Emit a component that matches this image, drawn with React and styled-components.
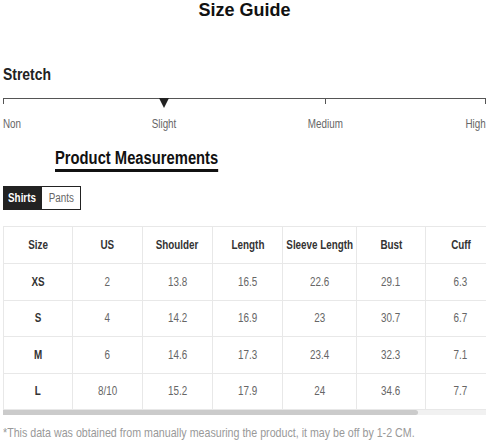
import styled, { createGlobalStyle } from "styled-components";

const GlobalStyle = createGlobalStyle`
  body {
    margin: 0;
    background: #fff;
    font-family: "Liberation Sans", Arial, sans-serif;
    color: #333;
  }
`;

const sizes = [
  { size: "XS", us: "2", shoulder: "13.8", length: "16.5", sleeve: "22.6", bust: "29.1", cuff: "6.3" },
  { size: "S", us: "4", shoulder: "14.2", length: "16.9", sleeve: "23", bust: "30.7", cuff: "6.7" },
  { size: "M", us: "6", shoulder: "14.6", length: "17.3", sleeve: "23.4", bust: "32.3", cuff: "7.1" },
  { size: "L", us: "8/10", shoulder: "15.2", length: "17.9", sleeve: "24", bust: "34.6", cuff: "7.7" },
];

const columns = [
  { key: "size", label: "Size", width: 69 },
  { key: "us", label: "US", width: 70 },
  { key: "shoulder", label: "Shoulder", width: 70 },
  { key: "length", label: "Length", width: 70 },
  { key: "sleeve", label: "Sleeve Length", width: 74 },
  { key: "bust", label: "Bust", width: 69 },
  { key: "cuff", label: "Cuff", width: 70 },
];

const stops = ["Non", "Slight", "Medium", "High"];

const VIEW_WIDTH = 483;
const CONTENT_WIDTH = 562;

function App() {
  return (
    <Page>
      <GlobalStyle />
      <Title>Size Guide</Title>

      <Section>
        <SectionTitle>
          <Narrow $origin="left">Stretch</Narrow>
        </SectionTitle>
        <Scale>
          <Tick $pos={0} />
          <Tick $pos={2 / 3} />
          <Tick $pos={1} />
          <Marker $pos={1 / 3} />
        </Scale>
        <ScaleLabels>
          {stops.map((s, i) => (
            <ScaleLabel key={s}>
              <Narrow
                $origin={i === 0 ? "left" : i === stops.length - 1 ? "right" : "center"}
              >
                {s}
              </Narrow>
            </ScaleLabel>
          ))}
        </ScaleLabels>
      </Section>

      <MeasureTitle>Product Measurements</MeasureTitle>

      <Tabs>
        <Tab $active>
          <Narrow>Shirts</Narrow>
        </Tab>
        <Tab>
          <Narrow>Pants</Narrow>
        </Tab>
      </Tabs>

      <TableScroll>
        <Table>
          <colgroup>
            {columns.map((c) => (
              <col key={c.key} style={{ width: c.width }} />
            ))}
          </colgroup>
          <thead>
            <tr>
              {columns.map((c) => (
                <Th key={c.key}>
                  <CellInner>
                    <Narrow>{c.label}</Narrow>
                  </CellInner>
                </Th>
              ))}
            </tr>
          </thead>
          <tbody>
            {sizes.map((row) => (
              <tr key={row.size}>
                {columns.map((c) => (
                  <Td key={c.key} $bold={c.key === "size"}>
                    <CellInner>
                      <Narrow>{row[c.key]}</Narrow>
                    </CellInner>
                  </Td>
                ))}
              </tr>
            ))}
          </tbody>
        </Table>
      </TableScroll>
      <ScrollTrack>
        <ScrollThumb style={{ width: `${(VIEW_WIDTH / CONTENT_WIDTH) * 100}%` }} />
      </ScrollTrack>

      <Note>
        <Narrow $origin="left">
          *This data was obtained from manually measuring the product, it may be
          off by 1-2 CM.
        </Narrow>
      </Note>
    </Page>
  );
}

export default App;

const Page = styled.div`
  width: 488px;
  height: 441px;
  padding: 0 2px 0 3px;
  box-sizing: border-box;
  overflow: hidden;
`;

/* the page uses a narrow grotesque; squeeze the Arial metrics to match */
const Narrow = styled.span`
  display: inline-block;
  white-space: nowrap;
  transform: scaleX(0.82);
  transform-origin: ${(p) => p.$origin || "center"};
`;

const Title = styled.h1`
  margin: 0;
  height: 24px;
  line-height: 21px;
  text-align: center;
  font-size: 18px;
  font-weight: 700;
  color: #111;
`;

const Section = styled.div`
  margin-top: 40px;
`;

const SectionTitle = styled.h2`
  margin: 0;
  font-size: 17px;
  font-weight: 700;
  line-height: 22px;
  color: #222;
`;

const Scale = styled.div`
  position: relative;
  margin-top: 12px;
  height: 1px;
  background: #555;
`;

const Tick = styled.span`
  position: absolute;
  top: 0;
  left: ${(p) => p.$pos * 100}%;
  margin-left: ${(p) => (p.$pos === 1 ? "-1px" : "0")};
  width: 1px;
  height: 6px;
  background: #555;
`;

const Marker = styled.span`
  position: absolute;
  top: 0;
  left: ${(p) => p.$pos * 100}%;
  margin-left: -5px;
  width: 0;
  height: 0;
  border-left: 5px solid transparent;
  border-right: 5px solid transparent;
  border-top: 10px solid #222;
`;

const ScaleLabels = styled.div`
  display: flex;
  justify-content: space-between;
  margin-top: 18px;
`;

const ScaleLabel = styled.span`
  width: 0;
  display: flex;
  justify-content: center;
  font-size: 12px;
  line-height: 14px;
  color: #666;

  &:first-child {
    justify-content: flex-start;
  }
  &:last-child {
    justify-content: flex-end;
  }
`;

const MeasureTitle = styled.h2`
  display: inline-block;
  margin: 16px 0 0 52px;
  font-size: 18px;
  font-weight: 700;
  line-height: 22px;
  color: #111;
  white-space: nowrap;
  border-bottom: 3px solid #111;
  transform: scaleX(0.82);
  transform-origin: left;
`;

const Tabs = styled.div`
  display: flex;
  margin-top: 14px;
`;

const Tab = styled.button`
  display: flex;
  align-items: center;
  justify-content: center;
  width: 39px;
  height: 24px;
  padding: 0;
  border: 1px solid #222;
  border-left-width: ${(p) => (p.$active ? "1px" : "0")};
  background: ${(p) => (p.$active ? "#222" : "#fff")};
  color: ${(p) => (p.$active ? "#fff" : "#666")};
  font-family: inherit;
  font-size: 12px;
  font-weight: ${(p) => (p.$active ? 700 : 400)};
  cursor: pointer;
`;

const TableScroll = styled.div`
  margin-top: 16px;
  overflow: hidden;
`;

const Table = styled.table`
  border-collapse: collapse;
  table-layout: fixed;
  width: 492px;
`;

const CellInner = styled.div`
  display: flex;
  justify-content: center;
`;

const Th = styled.th`
  height: 36px;
  padding: 0;
  border: 1px solid #e8e8e8;
  font-size: 12px;
  font-weight: 700;
  color: #333;
`;

const Td = styled.td`
  height: 35.5px;
  padding: 0;
  border: 1px solid #e8e8e8;
  font-size: 12px;
  font-weight: ${(p) => (p.$bold ? 700 : 400)};
  color: ${(p) => (p.$bold ? "#333" : "#666")};
`;

const ScrollTrack = styled.div`
  height: 5px;
  background: #f1f1f1;
`;

const ScrollThumb = styled.div`
  height: 100%;
  background: #cbcbcb;
  border-radius: 0 3px 3px 0;
`;

const Note = styled.p`
  margin: 10px 0 0;
  font-size: 13px;
  line-height: 15px;
  color: #999;
`;
